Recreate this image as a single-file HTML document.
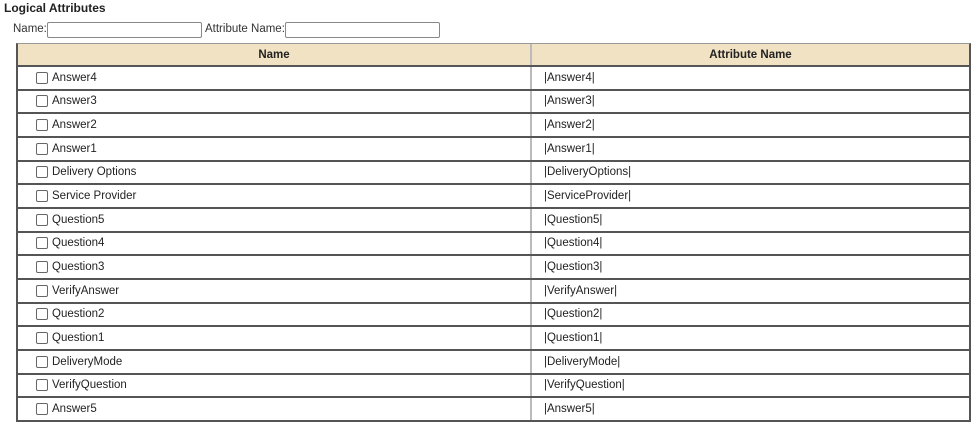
<!DOCTYPE html><html><head><style>
body{margin:0;background:#fff;font-family:"Liberation Sans",Arial,sans-serif;font-size:11.5px;color:#222;width:972px;height:422px;overflow:hidden;position:relative}
.t{position:absolute;left:4px;top:1px;font-weight:bold;font-size:12px;color:#222}
.f{position:absolute;top:23px;font-size:11.5px;color:#333}
.in{position:absolute;top:22px;height:16px;border:1px solid #888;border-radius:2px;box-sizing:border-box;background:#fff}
.tbl{position:absolute;left:16px;top:43px;width:955px;border:2px solid #555;border-top:1px solid #999;box-sizing:border-box}
.hd{height:21px;background:#f2e2c4;border-bottom:2px solid #555;display:flex;font-weight:bold;font-size:11.5px}
.hd div{display:flex;align-items:center;justify-content:center}
.r{height:21.67px;border-bottom:2px solid #555;display:flex;align-items:center;position:relative}
.r:last-child{border-bottom:none}
.c1{width:514px;border-right:2px solid #bbb;height:100%;display:flex;align-items:center;box-sizing:border-box}
.cb{width:10px;height:10px;border:1px solid #666;border-radius:2px;margin-left:18px;margin-right:4px;background:#fff}
.c2{padding-left:12px}
</style></head><body>
<div class="t">Logical Attributes</div>
<div class="f" style="left:13px">Name:</div><div class="in" style="left:47px;width:155px"></div>
<div class="f" style="left:205px">Attribute Name:</div><div class="in" style="left:285px;width:155px"></div>
<div class="tbl">
<div class="hd"><div class="c1">Name</div><div style="flex:1">Attribute Name</div></div>
<div class="r"><div class="c1"><span class="cb"></span>Answer4</div><div class="c2">|Answer4|</div></div>
<div class="r"><div class="c1"><span class="cb"></span>Answer3</div><div class="c2">|Answer3|</div></div>
<div class="r"><div class="c1"><span class="cb"></span>Answer2</div><div class="c2">|Answer2|</div></div>
<div class="r"><div class="c1"><span class="cb"></span>Answer1</div><div class="c2">|Answer1|</div></div>
<div class="r"><div class="c1"><span class="cb"></span>Delivery Options</div><div class="c2">|DeliveryOptions|</div></div>
<div class="r"><div class="c1"><span class="cb"></span>Service Provider</div><div class="c2">|ServiceProvider|</div></div>
<div class="r"><div class="c1"><span class="cb"></span>Question5</div><div class="c2">|Question5|</div></div>
<div class="r"><div class="c1"><span class="cb"></span>Question4</div><div class="c2">|Question4|</div></div>
<div class="r"><div class="c1"><span class="cb"></span>Question3</div><div class="c2">|Question3|</div></div>
<div class="r"><div class="c1"><span class="cb"></span>VerifyAnswer</div><div class="c2">|VerifyAnswer|</div></div>
<div class="r"><div class="c1"><span class="cb"></span>Question2</div><div class="c2">|Question2|</div></div>
<div class="r"><div class="c1"><span class="cb"></span>Question1</div><div class="c2">|Question1|</div></div>
<div class="r"><div class="c1"><span class="cb"></span>DeliveryMode</div><div class="c2">|DeliveryMode|</div></div>
<div class="r"><div class="c1"><span class="cb"></span>VerifyQuestion</div><div class="c2">|VerifyQuestion|</div></div>
<div class="r"><div class="c1"><span class="cb"></span>Answer5</div><div class="c2">|Answer5|</div></div>
</div>
</body></html>
